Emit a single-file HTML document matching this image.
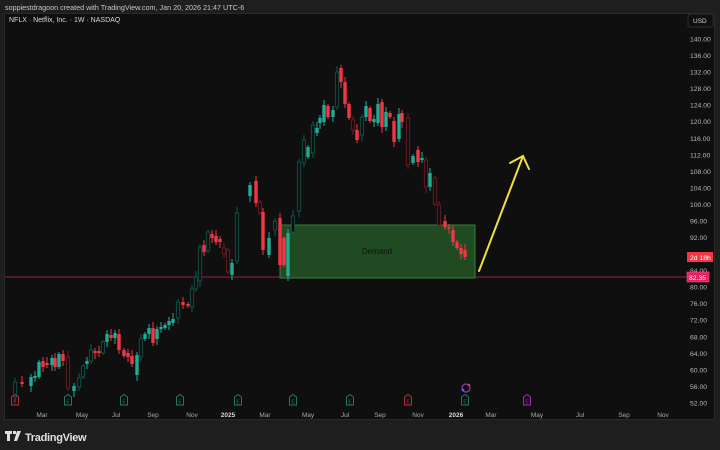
<!DOCTYPE html>
<html><head><meta charset="utf-8"><style>
body{margin:0;width:720px;height:450px;background:#1e1e1e;overflow:hidden;font-family:"Liberation Sans",sans-serif;}
.t{position:absolute;color:#d1d4dc;font-size:7px;}
</style></head><body>
<div class="t" style="left:5px;top:3px;font-size:7.2px;color:#c8c8c8">soppiestdragoon created with TradingView.com, Jan 20, 2026 21:47 UTC-6</div>
<div style="position:absolute;left:4px;top:13px;width:711px;height:407px;background:#0f0f0f;border:1px solid #2a2a2a;box-sizing:border-box"></div>
<div class="t" style="left:9px;top:17px;font-size:7px;color:#d8d8d8">NFLX · Netflix, Inc. · 1W · NASDAQ</div>
<svg id="c" width="720" height="450" style="position:absolute;left:0;top:0">
<line x1="5" y1="277" x2="687" y2="277" stroke="#8c2447" stroke-width="1"/>
<rect x="280" y="225" width="195" height="53" fill="#1f4a22" stroke="#3b7d3b" stroke-width="1"/>
<text x="377" y="254" font-size="8" fill="#111" text-anchor="middle" font-family="Liberation Sans">Demand</text>
<g id="k"></g>
<g stroke="#f0e040" stroke-width="2" fill="none" stroke-linecap="round"><line x1="479" y1="271" x2="523" y2="156"/><polyline points="510,163 523,156 529,169"/></g>
<rect x="688" y="14" width="25" height="13" rx="2" fill="#0f0f0f" stroke="#2e2e2e"/>
<text x="693" y="23" font-size="6.5" fill="#d1d4dc" font-family="Liberation Sans">USD</text>
<g id="ax" font-size="6.8" fill="#b8b8b8" font-family="Liberation Sans"></g>
<rect x="687" y="252" width="26" height="10" fill="#f23645"/>
<text x="690" y="260" font-size="6.8" fill="#fff" font-family="Liberation Sans">2d 18h</text>
<rect x="687" y="272" width="22" height="10" fill="#e91e63" stroke="#ff5a8a" stroke-width=".5"/>
<text x="689" y="280" font-size="6.8" fill="#fff" font-family="Liberation Sans">82.35</text>
<g id="tm" font-size="6.5" fill="#a8a8a8" font-family="Liberation Sans"></g>
<g id="em"></g>
<circle cx="466" cy="388" r="4" fill="none" stroke="#8a3fb0" stroke-width="1.2"/><circle cx="463" cy="390" r="1.3" fill="#6a5cff"/><circle cx="469" cy="385" r="1.2" fill="#f23645"/>
</svg>
<svg width="120" height="20" style="position:absolute;left:4px;top:428px">
<path d="M1 3h7v3h-2v7h-3v-7h-2z M9 3h3v3h-3z M13 3h4l-4 10h-3z" fill="#e0e0e0"/>
<text x="21" y="13" font-size="11" fill="#e0e0e0" font-family="Liberation Sans" font-weight="bold" letter-spacing="-0.3">TradingView</text>
</svg>
<script>
var D=[[15,382,397,'g',1],[22,382,384,'r'],[31,377,386,'g'],[35,376,378,'g'],[39,362,377,'g'],[43,361,367,'r'],[47,363,365,'r'],[52,358,365,'g'],[55,358,367,'r'],[59,354,367,'g'],[63,354,361,'r'],[68,357,388,'r',1],[74,386,391,'g'],[79,378,387,'g',1],[83,366,377,'g',1],[87,361,364,'g'],[91,350,361,'g',1],[95,351,353,'r'],[99,351,353,'r'],[103,342,353,'g',1],[107,334,342,'g'],[111,335,338,'r'],[115,333,338,'g'],[119,334,350,'r'],[124,350,356,'r'],[128,353,357,'r'],[132,356,364,'r'],[137,355,375,'g'],[141,339,357,'g',1],[145,334,339,'g'],[149,328,334,'g'],[153,328,343,'r'],[157,329,339,'g'],[161,327,329,'g'],[165,325,328,'g'],[169,321,325,'g'],[173,319,323,'g'],[178,302,318,'g',1],[183,302,305,'r'],[188,304,306,'r'],[192,289,307,'g',1],[196,277,289,'g',1],[200,247,281,'g',1],[204,245,252,'r'],[208,232,251,'g',1],[212,234,238,'r'],[216,236,242,'r'],[220,239,242,'r'],[224,248,254,'r',1],[228,250,272,'r',1],[232,263,275,'g'],[237,213,261,'g',1],[250,185,196,'g'],[256,181,203,'r'],[260,202,213,'r',1],[263,212,250,'r'],[269,238,255,'g'],[275,221,230,'g',1],[280,218,265,'r'],[284,238,265,'r'],[288,233,276,'g'],[293,216,232,'g',1],[299,162,211,'g',1],[304,140,163,'g',1],[308,147,157,'g'],[313,125,153,'g',1],[317,128,133,'g'],[320,118,123,'g'],[324,105,122,'g'],[328,106,117,'r'],[333,110,117,'g'],[337,72,107,'g',1],[341,68,82,'r'],[345,82,104,'r'],[349,104,118,'r'],[353,120,130,'r',1],[357,130,140,'r'],[362,117,135,'g',1],[366,106,117,'g'],[370,108,121,'r'],[374,119,122,'g'],[378,104,123,'g'],[382,102,127,'r'],[386,112,127,'g'],[390,113,117,'r'],[394,121,142,'r'],[399,114,139,'g'],[402,113,122,'r'],[408,118,165,'r',1],[413,156,163,'g'],[418,150,162,'r'],[422,158,160,'g'],[426,160,187,'r',1],[430,173,187,'g'],[435,178,204,'r',1],[439,205,225,'r',1],[445,221,227,'r'],[449,227,228,'r'],[453,230,242,'r'],[457,242,248,'r'],[461,248,254,'r'],[465,250,257,'r']];
var s='',i=0;
D.forEach(function(d){i++;var c=d[3]=='g'?'#22ab94':'#f23645';var hc=d[3]=='g'?'#0d5c4f':'#7a1c25';var w1=2+(i*7%5),w2=2+(i*3%5);
var cc=d[4]?hc:c;
s+='<line x1="'+d[0]+'" y1="'+(d[1]-w1)+'" x2="'+d[0]+'" y2="'+(d[2]+w2)+'" stroke="'+cc+'" stroke-width="1"/>';
s+='<rect x="'+(d[0]-1.7)+'" y="'+d[1]+'" width="3.4" height="'+Math.max(1.5,d[2]-d[1])+'" fill="'+(d[4]?'#0f0f0f':c)+'" stroke="'+cc+'" stroke-width="'+(d[4]?0.8:0)+'"/>';});
document.getElementById('k').innerHTML=s;
var a='';for(var p=140;p>=52;p-=4){var y=39+(140-p)*4.136;if(p==88)continue;a+='<text x="690" y="'+(y+2.5)+'">'+p.toFixed(2)+'</text>';}
document.getElementById('ax').innerHTML=a;
var T=[['Mar',42],['May',82],['Jul',116],['Sep',153],['Nov',192],['2025',228,1],['Mar',265],['May',308],['Jul',345],['Sep',380],['Nov',418],['2026',456,1],['Mar',491],['May',537],['Jul',580],['Sep',624],['Nov',663]];
var t='';T.forEach(function(m){t+='<text x="'+m[1]+'" y="417" text-anchor="middle"'+(m[2]?' font-weight="bold" fill="#d8d8d8"':'')+'>'+m[0]+'</text>';});
document.getElementById('tm').innerHTML=t;
var E=[[15,'#c0283a'],[68,'#1a7a66'],[124,'#1a7a66'],[180,'#1a7a66'],[238,'#1a7a66'],[293,'#1a7a66'],[350,'#1a7a66'],[408,'#c0283a'],[465,'#1a7a66'],[527,'#b020c0']];
var e='';E.forEach(function(m){var x=m[0],c=m[1];e+='<path d="M'+(x-3.5)+' 397 L'+x+' 394.5 L'+(x+3.5)+' 397 V405 H'+(x-3.5)+'Z" fill="none" stroke="'+c+'" stroke-width="1"/><text x="'+x+'" y="403.5" font-size="5" fill="'+c+'" text-anchor="middle" font-family="Liberation Sans">E</text>';});
document.getElementById('em').innerHTML=e;
</script>
</body></html>
